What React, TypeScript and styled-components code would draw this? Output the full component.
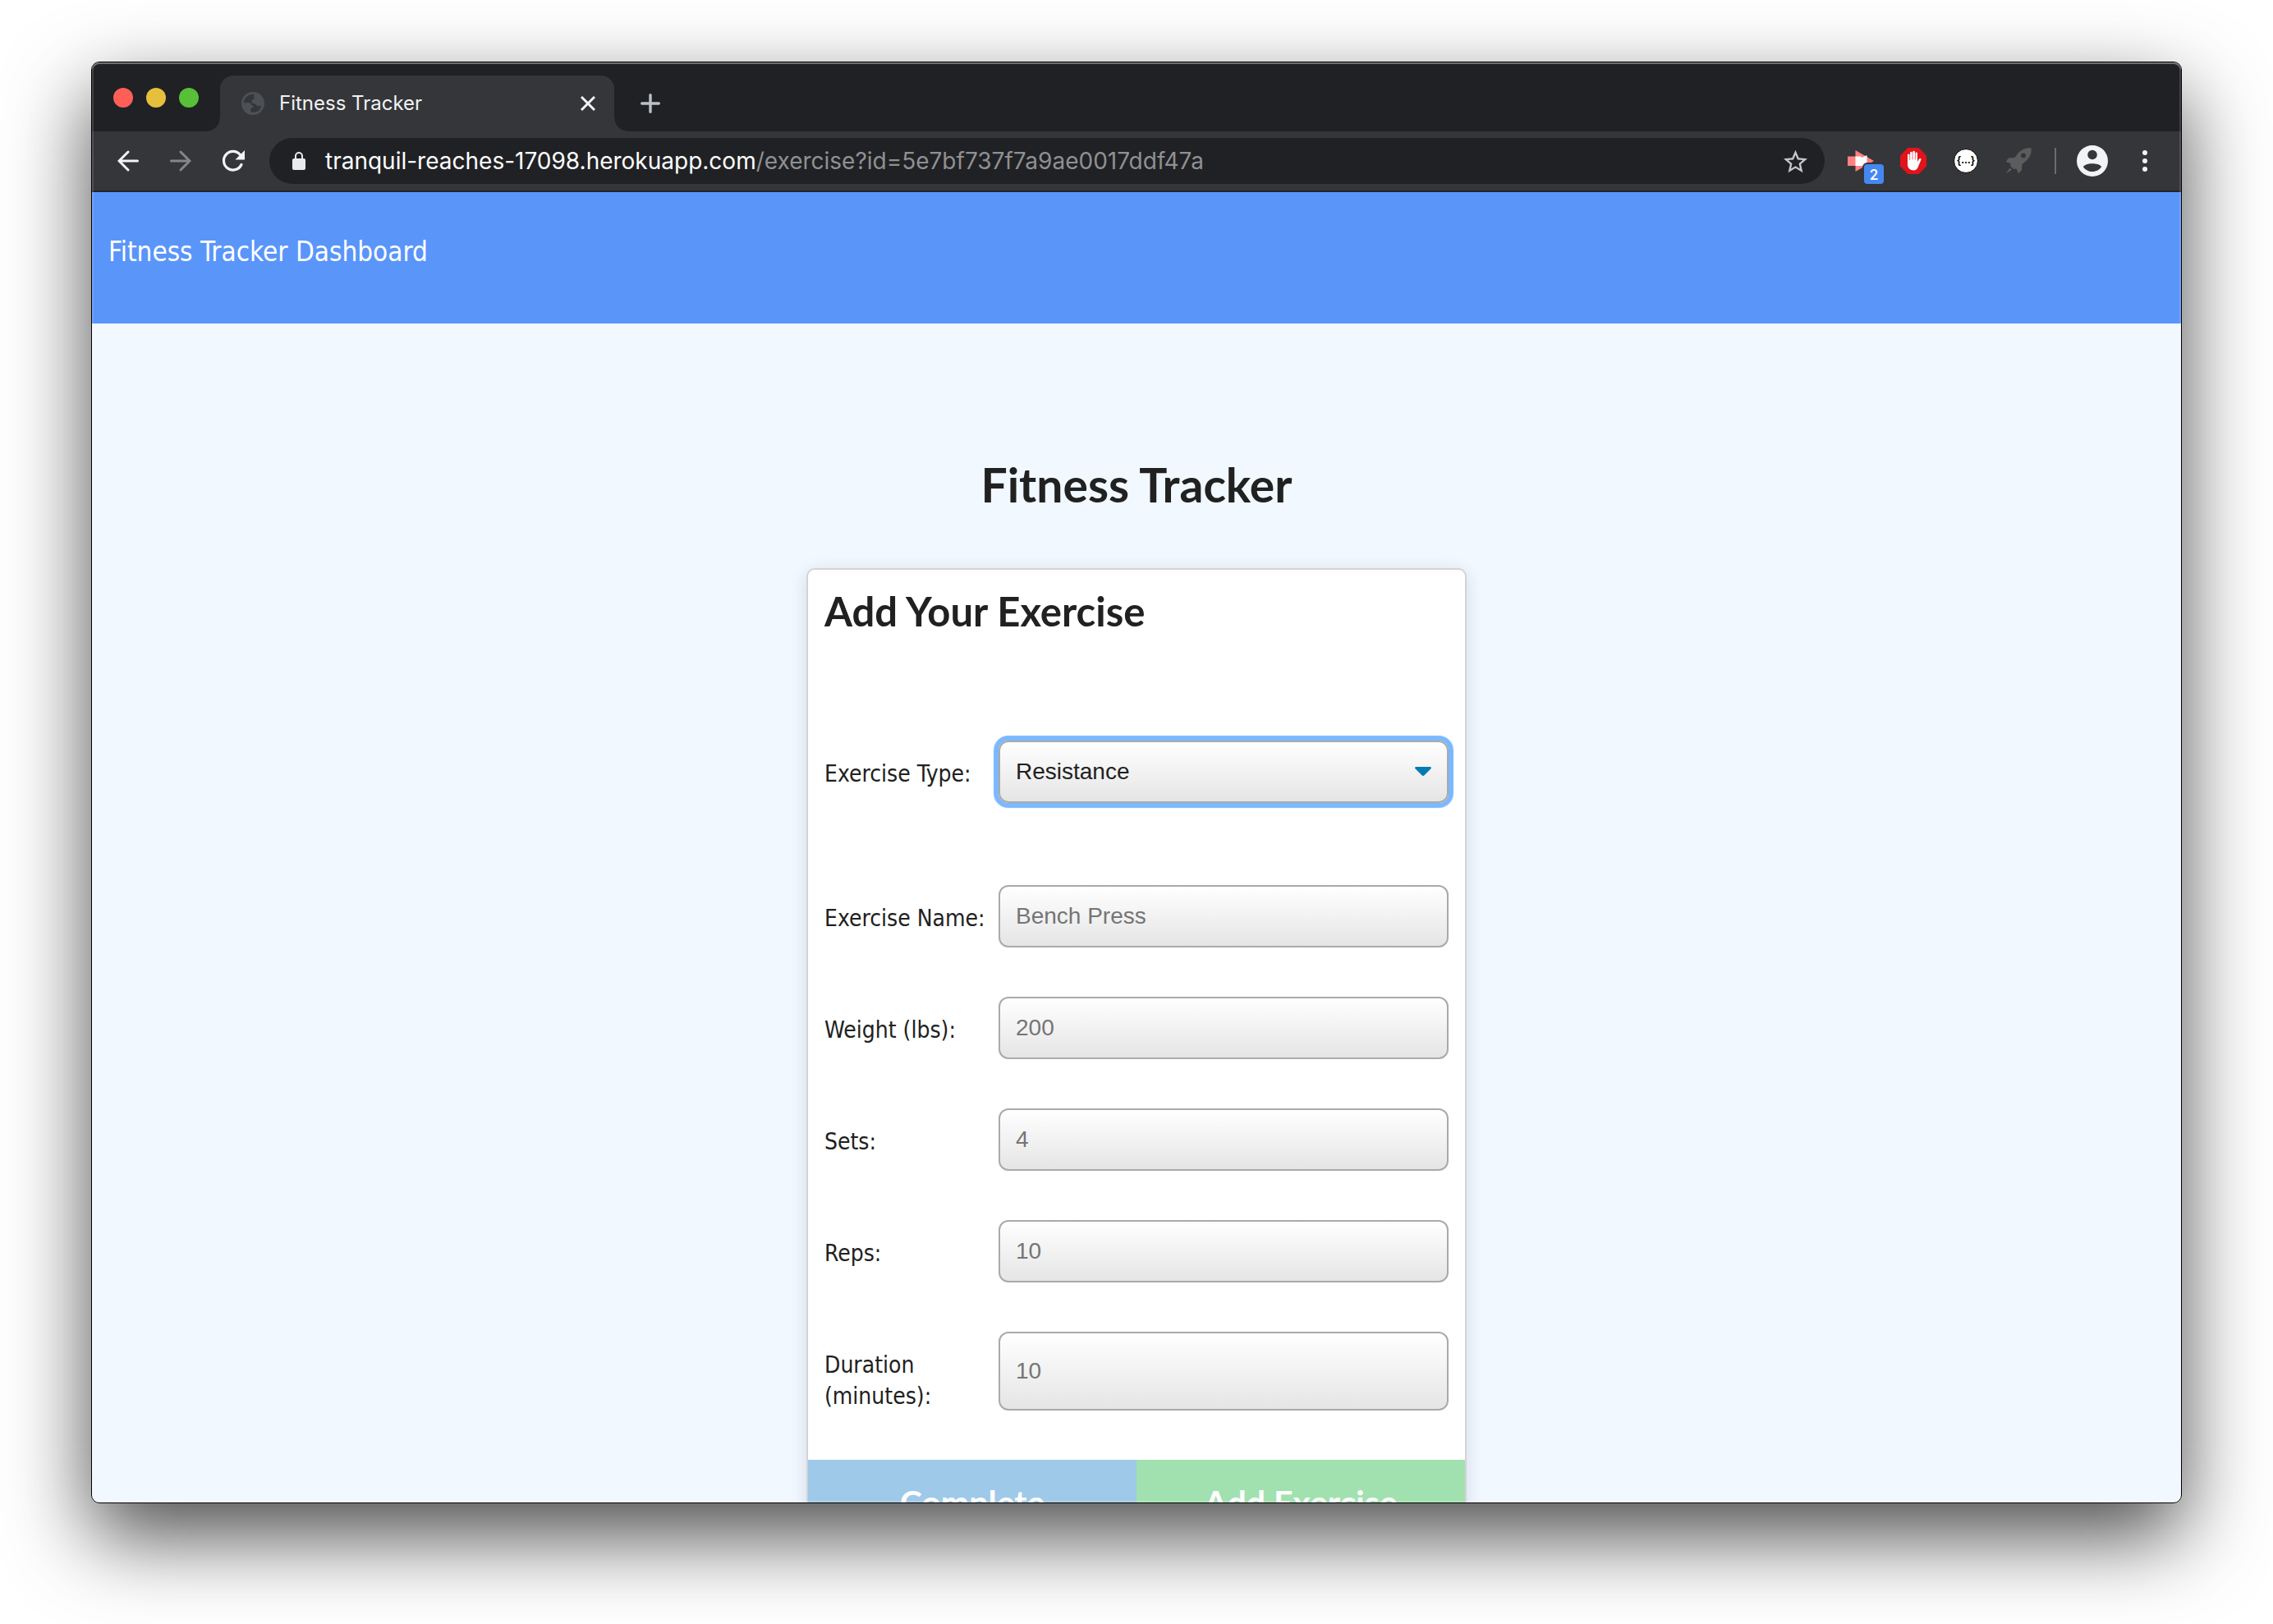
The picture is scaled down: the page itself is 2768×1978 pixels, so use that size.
import React from "react";
import styled, { createGlobalStyle } from "styled-components";

const chromeFont = `Inter, "Liberation Sans", sans-serif`;
const uiFont = `"DejaVu Sans Condensed", "Noto Sans", sans-serif`;
const fieldFont = `"Liberation Sans", Arial, sans-serif`;
const headingFont = `Lato, "Liberation Sans", sans-serif`;

const GlobalStyle = createGlobalStyle`
  *, *::before, *::after { box-sizing: border-box; }
  html, body, #root { height: 100%; }
  body { margin: 0; background: #fff; }
  h1, h2, form { margin: 0; }
`;

const Desktop = styled.div`
  height: 100vh;
  padding: 75px 111px 147px;
`;

const Window = styled.div`
  position: relative;
  display: flex;
  flex-direction: column;
  height: 100%;
  overflow: hidden;
  border: 1px solid #000;
  border-radius: 10px;
  background: #f1f8ff;
  &::after {
    content: "";
    position: absolute;
    inset: 0;
    border-radius: 9px;
    box-shadow: inset 0 2px 0 rgba(255, 255, 255, 0.25), inset 0 0 0 2px rgba(255, 255, 255, 0.15);
    pointer-events: none;
  }
`;

const Shadow = styled.div`
  height: 100%;
  border-radius: 10px;
  box-shadow: 0 40px 100px rgba(0, 0, 0, 0.7);
`;

const TabStrip = styled.div`
  display: flex;
  flex: none;
  align-items: flex-end;
  height: 84px;
  background: #202124;
`;

const Lights = styled.div`
  display: flex;
  gap: 16px;
  align-self: center;
  width: 156px;
  padding: 2px 0 0 26px;
`;

const Light = styled.button<{ $color: string }>`
  width: 24px;
  height: 24px;
  padding: 0;
  border: 0;
  border-radius: 50%;
  background: ${(p) => p.$color};
`;

const Tab = styled.div`
  position: relative;
  display: flex;
  align-items: center;
  width: 480px;
  height: 68px;
  padding: 0 20px 0 26px;
  border-radius: 16px 16px 0 0;
  background: #35363a;
  color: #f1f3f4;
  font: 24px/32px ${chromeFont};
  &::before, &::after {
    content: "";
    position: absolute;
    bottom: 0;
    width: 16px;
    height: 16px;
  }
  &::before { left: -16px; background: radial-gradient(circle at 0 0, transparent 15px, #35363a 16px); }
  &::after { right: -16px; background: radial-gradient(circle at 100% 0, transparent 15px, #35363a 16px); }
`;

const TabTitle = styled.span`
  flex: 1;
  padding-left: 18px;
`;

const IconButton = styled.button`
  display: flex;
  flex: none;
  align-items: center;
  justify-content: center;
  width: 24px;
  height: 24px;
  padding: 0;
  border: 0;
  background: none;
  color: #f1f3f4;
  svg { flex: none; }
`;

const NewTab = styled(IconButton)`
  align-self: flex-end;
  width: 56px;
  height: 68px;
  margin-left: 16px;
  color: #bdc1c6;
`;

const Toolbar = styled.div`
  display: flex;
  flex: none;
  align-items: center;
  height: 74px;
  padding: 0 28px;
  border-bottom: 2px solid #242528;
  background: #35363a;
`;

const NavButtons = styled.div`
  display: flex;
  gap: 32px;
  width: 188px;
`;

const NavButton = styled(IconButton)`
  width: 32px;
  height: 32px;
`;

const Omnibox = styled.div`
  display: flex;
  flex: 1;
  align-items: center;
  height: 56px;
  padding: 0 20px 0 28px;
  border-radius: 28px;
  background: #202124;
`;

const Address = styled.div`
  flex: 1;
  padding-left: 24px;
  color: #fff;
  font: 28px/40px ${chromeFont};
  white-space: nowrap;
`;

const AddressPath = styled.span`
  color: #8f9093;
`;

const Extensions = styled.div`
  display: flex;
  align-items: center;
  gap: 32px;
  padding-left: 28px;
`;

const Extension = styled(IconButton)`
  position: relative;
  width: 32px;
  height: 32px;
`;

const Badge = styled.span`
  position: absolute;
  left: 20px;
  top: 20px;
  width: 24px;
  height: 24px;
  border-radius: 4px;
  background: #4688f1;
  box-shadow: 0 0 0 2px #35363a;
  color: #fff;
  font: 500 18px/26px Roboto, sans-serif;
  text-align: center;
`;

const BracesMark = styled.span`
  width: 30px;
  height: 30px;
  border: 1px solid #000;
  border-radius: 50%;
  background: #fff;
  color: #000;
  font: bold 12px/26px ${fieldFont};
  text-align: center;
`;

const Menu = styled.div`
  display: flex;
  align-items: center;
  justify-content: space-between;
  width: 126px;
  height: 32px;
  margin-left: 28px;
  padding-left: 28px;
  border-left: 2px solid #6b6c70;
`;

const Page = styled.div`
  flex: 1;
  min-height: 0;
  overflow: hidden;
  color: #212121;
`;

const NavBar = styled.nav`
  height: 160px;
  padding: 49px 20px;
  background: #5a95fa;
`;

const Brand = styled.a`
  color: #fff;
  font: 33px/48px ${uiFont};
  text-decoration: none;
`;

const Main = styled.main`
  display: flex;
  flex-direction: column;
  align-items: center;
  padding-top: 160px;
`;

const PageTitle = styled.h1`
  font: bold 57px/72px ${headingFont};
`;

const Card = styled.form`
  display: flex;
  flex-direction: column;
  width: 804px;
  margin-top: 66px;
  overflow: hidden;
  border: 2px solid #d4d4d5;
  border-radius: 10px;
  background: #fff;
  box-shadow: 0 4px 20px rgba(34, 36, 90, 0.14);
`;

const CardTitle = styled.h2`
  padding: 18px 20px 0;
  font: bold 49px/64px ${headingFont};
`;

const Fields = styled.div`
  display: flex;
  flex-direction: column;
  gap: 60px;
  padding: 126px 20px 60px;
`;

const Row = styled.div<{ $spaced?: boolean }>`
  display: grid;
  grid-template-columns: 212px 1fr;
  height: auto;
  min-height: 76px;
  margin-bottom: ${(p) => (p.$spaced ? "40px" : "0")};
`;

const Label = styled.label`
  padding: 22px 0 0;
  margin-bottom: -2px;
  font: 28px/38px ${uiFont};
`;

const fieldStyle = `
  width: 100%;
  height: 100%;
  padding: 0 19px;
  border: 2px solid #aaa;
  border-radius: 12px;
  background: linear-gradient(#fff, #e5e5e5);
  font: 28px/36px ${fieldFont};
  outline: none;
`;

const Input = styled.input`
  ${fieldStyle}
  &::placeholder { color: #757575; opacity: 1; }
`;

const SelectBox = styled.div`
  position: relative;
  svg {
    position: absolute;
    right: 21px;
    top: 32px;
    pointer-events: none;
  }
`;

const Select = styled.select`
  ${fieldStyle}
  appearance: none;
  color: #212121;
  box-shadow: 0 0 1px 6px #7ab8ff;
`;

const Actions = styled.div`
  display: grid;
  grid-template-columns: 1fr 1fr;
`;

const Action = styled.button<{ $color: string }>`
  height: 104px;
  border: 0;
  background: ${(p) => p.$color};
  color: #fff;
  font: bold 41px/48px ${headingFont};
`;

const Globe = () => (
  <svg width="28" height="28" viewBox="0 0 28 28">
    <circle cx="14" cy="14" r="14" fill="#4d5055" />
    <path fill="#35363a" d="M16 3C9 2 3 7 3 13c3 1 6-1 8 1 1 2 2 3 4 3 0 2-3 2-4 4 0 2 1 3 2 4 6 0 10-3 11-8-1-1-3 1-5 0-1-2-3-3-5-3-2-1-2-4 0-5 2 0 2-2 1-4z" />
  </svg>
);

const fields = [
  { id: "name", label: "Exercise Name:", placeholder: "Bench Press" },
  { id: "weight", label: "Weight (lbs):", placeholder: "200" },
  { id: "sets", label: "Sets:", placeholder: "4" },
  { id: "reps", label: "Reps:", placeholder: "10" },
  { id: "duration", label: "Duration (minutes):", placeholder: "10" },
];

const BrowserTabs = () => (
  <TabStrip>
    <Lights>
      <Light $color="#ff5f57" aria-label="Close window" />
      <Light $color="#e6c03c" aria-label="Minimize window" />
      <Light $color="#57c038" aria-label="Zoom window" />
    </Lights>
    <Tab>
      <Globe />
      <TabTitle>Fitness Tracker</TabTitle>
      <IconButton aria-label="Close tab">
        <svg width="18" height="18" viewBox="0 0 18 18" stroke="currentColor" strokeWidth="3">
          <path d="M1 1l16 16M17 1L1 17" />
        </svg>
      </IconButton>
    </Tab>
    <NewTab aria-label="New tab">
      <svg width="24" height="24" viewBox="0 0 24 24" stroke="currentColor" strokeWidth="3.4" strokeLinecap="round">
        <path d="M12 1.7v20.6M1.7 12h20.6" />
      </svg>
    </NewTab>
  </TabStrip>
);

const BrowserToolbar = () => (
  <Toolbar>
    <NavButtons>
      <NavButton aria-label="Back">
        <svg width="26" height="26" viewBox="0 0 26 26" fill="none" stroke="#f1f3f4" strokeWidth="3" strokeLinecap="round">
          <path d="M24.500 13H2.500M13 2L2 13l11 11" />
        </svg>
      </NavButton>
      <NavButton aria-label="Forward">
        <svg width="26" height="26" viewBox="0 0 26 26" fill="none" stroke="#85868a" strokeWidth="3" strokeLinecap="round">
          <path d="M1.500 13h22M13 2l11 11-11 11" />
        </svg>
      </NavButton>
      <NavButton aria-label="Reload">
        <svg width="28" height="28" viewBox="0 0 28 28">
          <path d="M24 18.500A11.300 11.300 0 1 1 22.500 6.500" fill="none" stroke="#f1f3f4" strokeWidth="3.200" strokeLinecap="round" />
          <path d="M28 1v11.500H16.500z" fill="#f1f3f4" />
        </svg>
      </NavButton>
    </NavButtons>
    <Omnibox>
      <svg width="16" height="22" viewBox="0 0 16 22">
        <rect y="8" width="16" height="14" rx="2" fill="#e8eaed" />
        <path d="M4 9V5a4 4 0 0 1 8 0v4" fill="none" stroke="#e8eaed" strokeWidth="2" />
      </svg>
      <Address>
        tranquil-reaches-17098.herokuapp.com<AddressPath>/exercise?id=5e7bf737f7a9ae0017ddf47a</AddressPath>
      </Address>
      <NavButton aria-label="Bookmark this page">
        <svg width="29" height="29" viewBox="2 1.500 20 20" fill="#c4c7cb">
          <path d="M22 9.240l-7.190-.62L12 2 9.190 8.630 2 9.240l5.460 4.730L5.820 21 12 17.270 18.180 21l-1.630-7.030L22 9.240zM12 15.400l-3.760 2.270 1-4.280-3.320-2.880 4.380-.38L12 6.100l1.710 4.040 4.380.38-3.320 2.880 1 4.280L12 15.400z" />
        </svg>
      </NavButton>
    </Omnibox>
    <Extensions>
      <Extension aria-label="Arrow extension">
        <svg width="32" height="32" viewBox="0 0 32 32">
          <path d="M0 10.500h9.500V3L32 16 9.500 29v-7H0z" fill="#ff8080" />
          <path d="M9.500 10.500H16l1.500 1.500 6-3v8l-1.500 5H9.500z" fill="#fff" />
        </svg>
        <Badge>2</Badge>
      </Extension>
      <Extension aria-label="Blocker extension">
        <svg width="32" height="32" viewBox="0 0 32 32">
          <path d="M9.400 0h13.200L32 9.400v13.200L22.600 32H9.400L0 22.600V9.400z" fill="#e1131b" />
          <path d="M9 8.500a1.300 1.300 0 0 1 2.500 0V15h.6V6a1.300 1.300 0 0 1 2.600 0v8.500h.6V5a1.300 1.300 0 0 1 2.600 0v9.500h.6V6.500a1.300 1.300 0 0 1 2.500 0V17l2-3.500c1-1.200 3-.5 2.600.8L21.500 24c-1 2-2.500 3.500-5 3.500-4.500 0-7.500-3-7.500-7z" fill="#fff" />
        </svg>
      </Extension>
      <Extension aria-label="JSON extension">
        <BracesMark>{"{…}"}</BracesMark>
      </Extension>
      <Extension aria-label="Rocket extension">
        <svg width="32" height="32" viewBox="0 0 32 32" fill="#5c5c5c">
          <path fillRule="evenodd" d="M31.500.5C24-.5 18 3 13 10l-1.500 2L4 12.500.5 17l6 2-.5 3 4 4 3.500-.5L16 31.500l4-4.500.5-7c8-6 12-12 11-19.500zM22 6.500a3 3 0 1 1 0 6 3 3 0 0 1 0-6z" />
          <path d="M5.500 24.500l2.500 2.300-7.500 5z" />
        </svg>
      </Extension>
    </Extensions>
    <Menu>
      <NavButton aria-label="Profile">
        <svg width="38" height="38" viewBox="0 0 38 38">
          <circle cx="19" cy="19" r="19" fill="#f1f3f4" />
          <circle cx="19" cy="11.500" r="5.800" fill="#35363a" />
          <path d="M7.800 26c2.200-3 7-3.800 11.200-3.800s9 .8 11.200 3.800c-2.300 3.700-6.700 6-11.200 6s-8.900-2.300-11.200-6z" fill="#35363a" />
        </svg>
      </NavButton>
      <NavButton aria-label="Browser menu">
        <svg width="6" height="26" viewBox="0 0 6 26" fill="#f1f3f4">
          <circle cx="3" cy="3" r="3" />
          <circle cx="3" cy="13" r="3" />
          <circle cx="3" cy="23" r="3" />
        </svg>
      </NavButton>
    </Menu>
  </Toolbar>
);

export default function App() {
  return (
    <>
      <GlobalStyle />
      <Desktop>
        <Shadow>
          <Window>
            <BrowserTabs />
            <BrowserToolbar />
            <Page>
              <NavBar>
                <Brand href="#">Fitness Tracker Dashboard</Brand>
              </NavBar>
              <Main>
                <PageTitle>Fitness Tracker</PageTitle>
                <Card>
                  <CardTitle>Add Your Exercise</CardTitle>
                  <Fields>
                    <Row $spaced>
                      <Label htmlFor="type">Exercise Type:</Label>
                      <SelectBox>
                        <Select id="type" defaultValue="resistance">
                          <option value="resistance">Resistance</option>
                          <option value="cardio">Cardio</option>
                        </Select>
                        <svg width="20" height="11" viewBox="0 0 20 11">
                          <path d="M1.500 0h17c1.300 0 1.800 1.300 1 2.200l-8 8c-.9.900-2.100.9-3 0l-8-8C-.3 1.300.2 0 1.500 0z" fill="#007cb2" />
                        </svg>
                      </SelectBox>
                    </Row>
                    {fields.map((f) => (
                      <Row key={f.id}>
                        <Label htmlFor={f.id}>{f.label}</Label>
                        <Input id={f.id} placeholder={f.placeholder} />
                      </Row>
                    ))}
                  </Fields>
                  <Actions>
                    <Action type="button" $color="#9fc9e9">Complete</Action>
                    <Action type="button" $color="#a1e1b0">Add Exercise</Action>
                  </Actions>
                </Card>
              </Main>
            </Page>
          </Window>
        </Shadow>
      </Desktop>
    </>
  );
}
